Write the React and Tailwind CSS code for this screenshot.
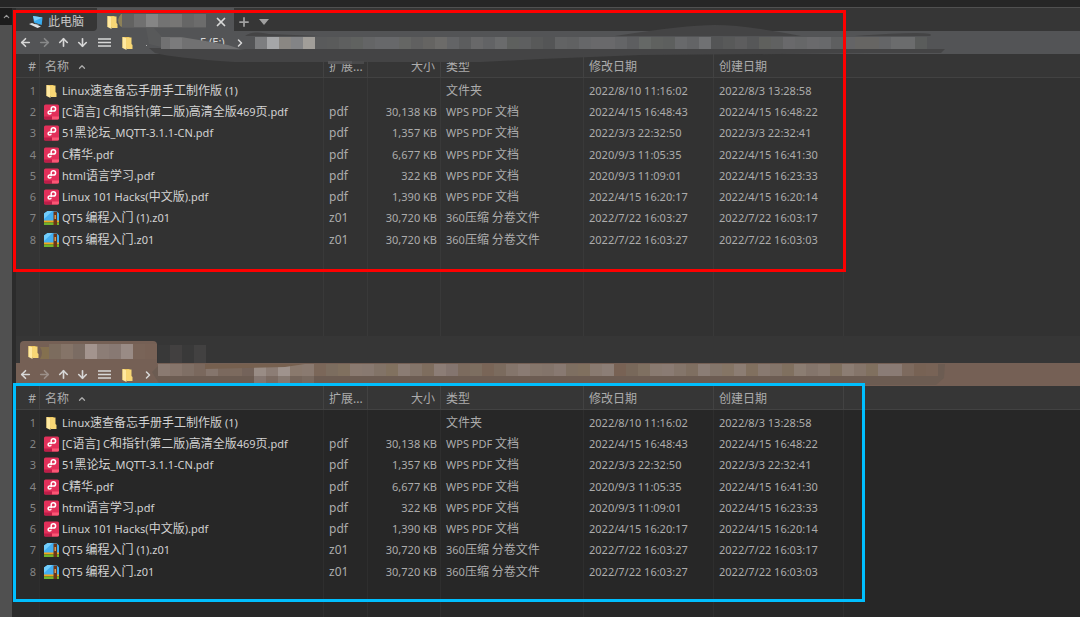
import React from 'react';
import { ArrowLeft, ArrowRight, ArrowUp, ArrowDown, ChevronRight, ChevronUp, Plus, X } from 'lucide-react';

const files = [
  { name: 'Linux速查备忘手册手工制作版 (1)', icon: 'folder', ext: '', size: '', type: '文件夹', modified: '2022/8/10 11:16:02', created: '2022/8/3 13:28:58' },
  { name: '[C语言] C和指针(第二版)高清全版469页.pdf', icon: 'pdf', ext: 'pdf', size: '30,138 KB', type: 'WPS PDF 文档', modified: '2022/4/15 16:48:43', created: '2022/4/15 16:48:22' },
  { name: '51黑论坛_MQTT-3.1.1-CN.pdf', icon: 'pdf', ext: 'pdf', size: '1,357 KB', type: 'WPS PDF 文档', modified: '2022/3/3 22:32:50', created: '2022/3/3 22:32:41' },
  { name: 'C精华.pdf', icon: 'pdf', ext: 'pdf', size: '6,677 KB', type: 'WPS PDF 文档', modified: '2020/9/3 11:05:35', created: '2022/4/15 16:41:30' },
  { name: 'html语言学习.pdf', icon: 'pdf', ext: 'pdf', size: '322 KB', type: 'WPS PDF 文档', modified: '2020/9/3 11:09:01', created: '2022/4/15 16:23:33' },
  { name: 'Linux 101 Hacks(中文版).pdf', icon: 'pdf', ext: 'pdf', size: '1,390 KB', type: 'WPS PDF 文档', modified: '2022/4/15 16:20:17', created: '2022/4/15 16:20:14' },
  { name: 'QT5 编程入门 (1).z01', icon: 'zip', ext: 'z01', size: '30,720 KB', type: '360压缩 分卷文件', modified: '2022/7/22 16:03:27', created: '2022/7/22 16:03:17' },
  { name: 'QT5 编程入门.z01', icon: 'zip', ext: 'z01', size: '30,720 KB', type: '360压缩 分卷文件', modified: '2022/7/22 16:03:27', created: '2022/7/22 16:03:03' },
];

const FolderIcon = () => (
  <svg viewBox="0 0 16 16" className="h-4 w-4 shrink-0">
    <path d="M2.500 2h7v11h-7z" fill="#e9bd4e" />
    <path d="M2.500 2l4 1v12l-4-2z" fill="#ffe9a0" />
    <path d="M6.500 2.500h5V9l1 1v4h-6z" fill="#f8d775" />
  </svg>
);

const PdfIcon = () => (
  <svg viewBox="0 0 16 16" className="h-4 w-4 shrink-0">
    <rect x="0" y="0.5" width="15" height="15" rx="1.500" fill="#e2305a" />
    <path d="M0 12.500h8v3H1.500A1.500 1.500 0 0 1 0 14z" fill="#bd1d48" />
    <path d="M8 12.500h7V14a1.500 1.500 0 0 1-1.500 1.500H8z" fill="#fb5675" />
    <path d="M7.200 8V4.800a2.200 2.200 0 1 1 2.200 2.300H5.500a1.500 1.500 0 1 0 1.600 1.600" fill="none" stroke="#fff" strokeWidth="1.500" />
  </svg>
);

const ZipIcon = () => (
  <svg viewBox="0 0 16 16" className="h-4 w-4 shrink-0">
    <path d="M0 3.500L3.500 1h9L15 3.500V11H0z" fill="#43aef0" />
    <path d="M0 3.500L3.500 1h5L0 9z" fill="#72cdfb" />
    <path d="M0 10.500h15v2H0z" fill="#f5a51d" />
    <path d="M0 12.500h15V15H0z" fill="#6fb52c" />
    <path d="M9.500 1.500H13V15H9.500z" fill="#6b3517" />
    <path d="M10.500 5H12v4h-1.500z" fill="#d99a52" />
  </svg>
);

const ComputerIcon = () => (
  <svg viewBox="0 0 16 16" className="h-4 w-4 shrink-0">
    <path d="M5 2l9.500 1.500-.8 7.500L6 8.500z" fill="#39adf0" />
    <path d="M5 2l9.500 1.500L6.500 7z" fill="#7bd0fa" />
    <path d="M7 9.500l4 1.200-1 1.300-3-.8z" fill="#96999b" />
    <path d="M1 10l3-1 9 3.500L9.500 14z" fill="#dce3e8" />
  </svg>
);

const MenuIcon = () => (
  <svg viewBox="0 0 13 9" className="h-[9px] w-[13px]">
    <path d="M0 1h13M0 4.500h13M0 8h13" stroke="currentColor" strokeWidth="1.500" />
  </svg>
);

const icons = { folder: FolderIcon, pdf: PdfIcon, zip: ZipIcon };

// Latin runs are set one pixel smaller than the Chinese ones
const MixedText = ({ text }) => (
  <span>
    {text.split(/([\u4e00-\u9fff]+)/).map((part, i) =>
      i % 2 ? part : <span key={i} className="text-[11px]">{part}</span>
    )}
  </span>
);

const Blocks = ({ x, y, h, colors }) =>
  colors.map((color, i) => <rect key={i} x={x + i * 12} y={y} width="12" height={h} fill={color} />);

const grayTab = ['#626261', '#707070', '#858585', '#737373', '#777675', '#666666', '#6c6c6c'];
const grayPath = [
  '#7d7e80', '#a5a6a8', '#8a8783', '#838486', '#a19e99', '#595a5b', '#5a5b5b', '#5e5f5f', '#606260', '#646566',
  '#67686a', '#67686a', '#656664', '#606060', '#656462', '#6c6b69', '#636466', '#5c5d5e', '#686869', '#626365',
  '#6a6b6c', '#5e605e', '#5e5f60', '#585959', '#545556', '#626364', '#606162', '#666769', '#69696b', '#69696b',
  '#646567', '#5d5e60', '#656866', '#5f615f', '#5d5f5e', '#68696b', '#636466', '#707173', '#545556', '#585959',
  '#5d5d5e', '#565758', '#5f605d', '#606161', '#69696b', '#666768', '#6a6a6c', '#68696b', '#5e5f60', '#646466',
  '#666563', '#666563', '#646567', '#6b6c6d', '#6b6c6d', '#5a5c5b',
];
const brownTab = ['#7c6c5e', '#857468', '#7b6c63', '#a3948e', '#8c7d76', '#887973', '#998b85', '#796458', '#786256'];
const brownPath = [
  '#8a7a71', '#86756b', '#7f6f65', '#7a685d', '#85756c', '#7b695e', '#7c6a5e', '#74635a', '#998c85', '#8c7d75',
  '#9f938d', '#8a796d', '#8a7a70', '#7b6759', '#7c6d5f', '#80705f', '#8a7a70', '#887970', '#827367', '#81715f',
  '#8b7c73', '#84756a', '#7e6d5e', '#8c7d76', '#84756f', '#7c6b5e', '#7d6e60', '#796557', '#7b6b5e', '#84756b',
  '#8a7b73', '#85766b', '#83746a', '#887971', '#7e6f61', '#80705f', '#897a70', '#8c7e76', '#786254', '#78685a',
  '#7f7061', '#897a70', '#8a7b73', '#84756a', '#7f6f61', '#8b7d75', '#84766b', '#857565', '#8c7d73', '#81705f',
  '#887970', '#84756a', '#80705f', '#8b7d72', '#84756b', '#897a70', '#80705f', '#8c7d73', '#85756a', '#80705f',
  '#8a7c76', '#8a7b74', '#7d6a5e', '#776254', '#786356',
];

const GraySmudge = () => (
  <svg width="1064" height="80" viewBox="16 8 1064 80" className="pointer-events-none absolute top-0 left-0">
    <path d="M121 14l-4 6 5 8h84V14z" fill="#5d5d5e" />
    <path d="M121 14q-5 6-1 12l2 1V14z" fill="#8d8157" />
    <Blocks x={122} y={14} h={13} colors={grayTab} />
    <path d="M146 28h8l8 9-1 10-12-3z" fill="#58595a" />
    <path d="M149 48h40l50 2 6-1h700l-4 4h-70l-90 1-140 1-100 4-60 3H234q-60-4-79-9z" fill="#444445" />
    <path d="M245 36q8-6 24-2l50 2z" fill="#444445" />
    <path d="M615 36q70-11 100-11t86 11z" fill="#444445" />
    <path d="M855 36q40-3 60-3t15 3z" fill="#444445" />
    <path d="M161 37h20l30 5 17 3 12 4h-79z" fill="#717172" />
    <path d="M170 38h12v11h-12z" fill="#7b7b7c" />
    <Blocks x={255} y={37} h={12} colors={grayPath} />
    <path d="M328 61h24v3h-24z" fill="#555557" />
    <path d="M352 61h12v3h-12z" fill="#49494a" />
    <path d="M146 45h1v1h-1z" fill="#b0b0b0" />
  </svg>
);

const BrownSmudge = () => (
  <svg width="1064" height="46" viewBox="16 340 1064 46" className="pointer-events-none absolute top-0 left-0">
    <path d="M40 347q4 6 0 12h10v-12z" fill="#84704f" />
    <Blocks x={49} y={344} h={15} colors={brownTab} />
    <Blocks x={158} y={345} h={18} colors={['#393939', '#424040', '#393939', '#424141']} />
    <path d="M152 372l8-8h785l-1 14-8 7H160z" fill="#6c5c52" />
    <Blocks x={158} y={364} h={12} colors={brownPath} />
    <Blocks x={254} y={376} h={8} colors={['#857771', '#7b6b62', '#867971', '#75655b', '#796a60']} />
    <path d="M205 364h100l-20 3-80 2z" fill="#76604f" />
  </svg>
);

const iconButton = 'flex w-[19px] items-center justify-center';

const AddressBar = ({ className, children }) => (
  <div className={`flex h-[23px] items-center ${className}`}>
    <button aria-label="Back" className={iconButton}><ArrowLeft size={13} strokeWidth={3} /></button>
    <button aria-label="Forward" className={`${iconButton} opacity-40`}><ArrowRight size={13} strokeWidth={3} /></button>
    <button aria-label="Up" className={iconButton}><ArrowUp size={13} strokeWidth={3} /></button>
    <button aria-label="Down" className={iconButton}><ArrowDown size={13} strokeWidth={3} /></button>
    <button aria-label="Menu" className="flex w-6 items-center justify-center"><MenuIcon /></button>
    <div className="ml-1 flex items-center"><FolderIcon /></div>
    {children}
  </div>
);

const th = 'border-b border-r border-[#424242] px-[5px] pt-0.5 text-left font-normal';

const FileTable = ({ label, body, line, gutter }) => {
  const td = `border-r px-[5px] ${line}`;
  return (
    <table aria-label={label} className={`w-full flex-1 table-fixed border-separate border-spacing-0 text-xs whitespace-nowrap text-[#acacac] ${body}`}>
      <colgroup>
        <col className="w-6" />
        <col className="w-[284px]" />
        <col className="w-11" />
        <col className="w-[73px]" />
        <col className="w-[143px]" />
        <col className="w-[130px]" />
        <col className="w-[130px]" />
        <col />
      </colgroup>
      <thead className="bg-[#363636]">
        <tr className="h-6">
          <th className={`${th} pr-[3px] text-right`}>#</th>
          <th className={th}>
            <button className="flex items-center gap-2">名称 <ChevronUp size={10} strokeWidth={3} /></button>
          </th>
          <th className={th}>扩展...</th>
          <th className={`${th} text-right`}>大小</th>
          <th className={th}>类型</th>
          <th className={th}>修改日期</th>
          <th className={th}>创建日期</th>
          <th className="border-b border-[#424242]"></th>
        </tr>
      </thead>
      <tbody>
        <tr className="h-0.5">
          <td className={`border-r ${line} ${gutter}`}></td>
          {[1, 2, 3, 4, 5, 6].map((n) => <td key={n} className={`border-r ${line}`}></td>)}
          <td></td>
        </tr>
        {files.map((file, index) => {
          const Icon = icons[file.icon];
          return (
            <tr key={file.name} className="h-[21px] leading-4 nth-[4n]:h-[22px]">
              <td className={`${td} ${gutter} pr-[3px] text-right text-[11px] text-[#858585]`}>{index + 1}</td>
              <td className={`border-r pl-1 text-[#d2d2d2] ${line}`}>
                <div className="flex items-center gap-0.5"><Icon /><MixedText text={file.name} /></div>
              </td>
              <td className={td}>{file.ext}</td>
              <td className={`${td} pr-[3px] text-right text-[11px]`}>{file.size}</td>
              <td className={td}><MixedText text={file.type} /></td>
              <td className={`${td} text-[11px]`}>{file.modified}</td>
              <td className={`${td} text-[11px]`}>{file.created}</td>
              <td></td>
            </tr>
          );
        })}
        {/* empty area under the last file */}
        <tr className="h-full">
          <td className={`border-r ${line} ${gutter}`}></td>
          {[1, 2, 3, 4, 5, 6].map((n) => <td key={n} className={`border-r ${line}`}></td>)}
          <td></td>
        </tr>
      </tbody>
    </table>
  );
};

const App = () => {
  return (
    <div className="relative flex min-h-screen flex-col overflow-hidden bg-[#363636] font-['Noto_Sans','Noto_Sans_CJK_SC',sans-serif] text-xs text-[#d8d8d8]">
      <div className="h-2 border-b border-[#505050] bg-[#262626]"></div>
      <div className="flex flex-1">
        <aside className="w-4 border-r-4 border-[#2b2b2b] bg-[#505050]">
          <button aria-label="Collapse" className="flex h-[17px] w-3 items-center justify-center bg-[#1c1c1c] text-[#999]">
            <ChevronUp size={9} strokeWidth={3} />
          </button>
        </aside>

        <main className="flex min-w-0 flex-1 flex-col">
          <section className="relative flex h-[332px] flex-col border-b-4 border-[#363636]">
            <div className="flex h-[23px] items-stretch bg-[#535456]">
              <button className="flex w-[81px] items-center gap-1 rounded-br bg-[#363636] pt-1 pl-3 text-[#c8c8c8]">
                <ComputerIcon />此电脑
              </button>
              <div className="flex w-[137px] items-center justify-between pt-1 pr-1.5 pl-2">
                <FolderIcon />
                <button aria-label="Close tab"><X size={14} strokeWidth={3} /></button>
              </div>
              <div className="flex flex-1 bg-[#363636] pt-1 text-[#a0a0a0]">
                <button aria-label="New tab" className="flex w-5 items-center justify-center">
                  <Plus size={14} strokeWidth={3} />
                </button>
                <button aria-label="Tab list" className="flex w-5 items-center justify-center">
                  <svg viewBox="0 0 10 6" className="h-1.5 w-2.5"><path d="M0 0h10L5 6z" fill="currentColor" /></svg>
                </button>
              </div>
            </div>
            <AddressBar className="bg-[#535456]">
              <span className="ml-16 w-7 text-[11px]">E (E:)</span>
              <ChevronRight size={12} strokeWidth={3} className="ml-1.5" />
            </AddressBar>
            <FileTable label="Top pane files" body="bg-[#323232]" line="border-[#393939]" gutter="bg-[#343434]" />
            <GraySmudge />
          </section>

          <section className="relative flex flex-1 flex-col">
            <div className="flex h-[23px] items-end pl-1">
              <div className="flex h-[22px] w-[137px] items-center rounded-t bg-[#756055] pl-1.5">
                <FolderIcon />
              </div>
            </div>
            <AddressBar className="bg-[#756055]">
              <ChevronRight size={12} strokeWidth={3} className="ml-1.5" />
            </AddressBar>
            <FileTable label="Bottom pane files" body="bg-[#272727]" line="border-[#2e2e2e]" gutter="bg-[#2b2b2b]" />
            <BrownSmudge />
          </section>
        </main>
      </div>

      {/* highlight frames */}
      <div className="pointer-events-none absolute top-[10px] left-[13px] h-[262px] w-[833px] border-3 border-[#fe0000]"></div>
      <div className="pointer-events-none absolute top-[383px] left-[13px] h-[219px] w-[852px] border-3 border-[#00bfff]"></div>
    </div>
  );
};

export default App;
